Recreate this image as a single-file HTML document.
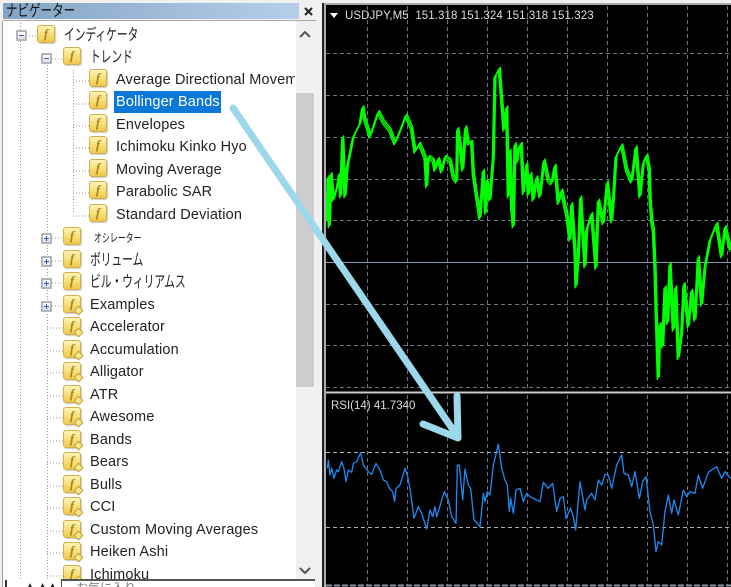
<!DOCTYPE html>
<html><head><meta charset="utf-8"><style>
html,body{margin:0;padding:0;background:#f0f0f0}
#p{position:relative;width:731px;height:587px;overflow:hidden;background:#f0f0f0;font-family:"Liberation Sans","Noto Sans CJK JP",sans-serif;filter:blur(.35px)}
.a{position:absolute}
.t{position:absolute;font-size:14.5px;line-height:18px;letter-spacing:.15px;color:#222;white-space:nowrap;margin-top:1px}
.j{font-size:16px;letter-spacing:0;transform-origin:0 50%;transform:scaleX(.67);margin-top:2px}
.ic{position:absolute;width:16px;height:16px;border:1px solid #d0b04a;border-radius:3px;background:linear-gradient(#fff3b8,#f8de74 55%,#f0c84c);box-shadow:1px 1px 1px #ccc;font:italic bold 13px/16px "Liberation Serif",serif;color:#a8862a;text-align:center}
.ic b{position:absolute;right:-2px;bottom:-2px;width:5px;height:5px;background:#fbe68a;border:1px solid #c0a038;transform:rotate(45deg)}
.bx{position:absolute;width:7px;height:7px;border:2px solid #b4b4b8;background:linear-gradient(#fff,#dde);border-radius:1px}
.bx:before{content:"";position:absolute;left:1px;top:3px;width:5px;height:1px;background:#3a5aa8}
.pl:after{content:"";position:absolute;left:3px;top:1px;width:1px;height:5px;background:#3a5aa8}
</style></head><body><div id="p">
<div class="a" style="left:3px;top:21px;width:312px;height:566px;background:#fff"></div>
<div class="a" style="left:3px;top:3px;width:296px;height:16px;background:linear-gradient(90deg,#83a3c4,#b6cfe9)"></div>
<div class="a" style="left:6px;top:3px;font-size:16px;line-height:18px;color:#111;transform-origin:0 50%;transform:scaleX(.72)">ナビゲーター</div>
<svg class="a" style="left:304px;top:7px" width="10" height="9"><path d="M1 1L8 8M8 1L1 8" stroke="#222" stroke-width="2"/></svg>
<div class="a" style="left:3px;top:20px;width:313px;height:1px;background:#aaa"></div>
<div class="a" style="left:2px;top:21px;width:1px;height:566px;background:#999"></div>
<div class="a" style="left:296px;top:21px;width:19px;height:559px;background:#f0f0f0"></div>
<div class="a" style="left:296px;top:93px;width:18px;height:294px;background:#cdcdcd"></div>
<svg class="a" style="left:299px;top:30px" width="12" height="8"><path d="M1 7L6 2L11 7" stroke="#555" stroke-width="2" fill="none"/></svg>
<svg class="a" style="left:299px;top:567px" width="12" height="8"><path d="M1 1L6 6L11 1" stroke="#555" stroke-width="2" fill="none"/></svg>

<svg class="a" style="left:0;top:0" width="296" height="587" stroke="#999" stroke-dasharray="1 2" fill="none">
<path d="M20.5 23V580M47.5 65V580M73.5 70V214"/>
<path d="M26 36H37M52 59H63M73 81H89M73 104H89M73 126H89M73 148H89M73 171H89M73 193H89M73 216H89M52 238H63M52 261H63M52 283H63M52 306H63M47 328H63M47 351H63M47 373H63M47 396H63M47 418H63M47 441H63M47 463H63M47 486H63M47 508H63M47 531H63M47 553H63M47 576H63"/>
</svg>

<div class="bx" style="left:16px;top:30px"></div><div class="ic" style="left:37px;top:25px">f</div><div class="t j" style="left:64px;top:25px">インディケータ</div>
<div class="bx" style="left:41px;top:53px"></div><div class="ic" style="left:63px;top:47px">f</div><div class="t j" style="left:90px;top:47px">トレンド</div>
<div class="ic" style="left:89px;top:69px">f</div><div class="t" style="left:116px;top:70px;width:179px;overflow:hidden">Average Directional Movement</div>
<div class="ic" style="left:89px;top:91px">f</div><div class="a" style="left:114px;top:91px;width:107px;height:22px;background:#0a78d7"></div><div class="t" style="left:116px;top:92px;color:#fff">Bollinger Bands</div>
<div class="ic" style="left:89px;top:114px">f</div><div class="t" style="left:116px;top:115px">Envelopes</div>
<div class="ic" style="left:89px;top:136px">f</div><div class="t" style="left:116px;top:137px">Ichimoku Kinko Hyo</div>
<div class="ic" style="left:89px;top:159px">f</div><div class="t" style="left:116px;top:160px">Moving Average</div>
<div class="ic" style="left:89px;top:181px">f</div><div class="t" style="left:116px;top:182px">Parabolic SAR</div>
<div class="ic" style="left:89px;top:204px">f</div><div class="t" style="left:116px;top:205px">Standard Deviation</div>
<div class="bx pl" style="left:41px;top:233px"></div><div class="ic" style="left:63px;top:227px">f</div><div class="t j" style="left:94px;top:227px;font-size:12px;transform:scaleX(.66)">オシレーター</div>
<div class="bx pl" style="left:41px;top:256px"></div><div class="ic" style="left:63px;top:250px">f</div><div class="t j" style="left:90px;top:250px">ボリューム</div>
<div class="bx pl" style="left:41px;top:278px"></div><div class="ic" style="left:63px;top:272px">f</div><div class="t j" style="left:90px;top:272px">ビル・ウィリアムス</div>
<div class="bx pl" style="left:41px;top:301px"></div><div class="ic" style="left:63px;top:295px">f<b></b></div><div class="t" style="left:90px;top:295px">Examples</div>
<div class="ic" style="left:63px;top:317px">f<b></b></div><div class="t" style="left:90px;top:317px">Accelerator</div>
<div class="ic" style="left:63px;top:340px">f<b></b></div><div class="t" style="left:90px;top:340px">Accumulation</div>
<div class="ic" style="left:63px;top:362px">f<b></b></div><div class="t" style="left:90px;top:362px">Alligator</div>
<div class="ic" style="left:63px;top:385px">f<b></b></div><div class="t" style="left:90px;top:385px">ATR</div>
<div class="ic" style="left:63px;top:407px">f<b></b></div><div class="t" style="left:90px;top:407px">Awesome</div>
<div class="ic" style="left:63px;top:430px">f<b></b></div><div class="t" style="left:90px;top:430px">Bands</div>
<div class="ic" style="left:63px;top:452px">f<b></b></div><div class="t" style="left:90px;top:452px">Bears</div>
<div class="ic" style="left:63px;top:475px">f<b></b></div><div class="t" style="left:90px;top:475px">Bulls</div>
<div class="ic" style="left:63px;top:497px">f<b></b></div><div class="t" style="left:90px;top:497px">CCI</div>
<div class="ic" style="left:63px;top:520px">f<b></b></div><div class="t" style="left:90px;top:520px">Custom Moving Averages</div>
<div class="ic" style="left:63px;top:542px">f<b></b></div><div class="t" style="left:90px;top:542px">Heiken Ashi</div>
<div class="ic" style="left:63px;top:565px">f<b></b></div><div class="t" style="left:90px;top:565px">Ichimoku</div>

<div class="a" style="left:3px;top:580px;width:312px;height:7px;background:#fff"></div>
<div class="a" style="left:61px;top:579px;width:254px;height:2px;background:#555"></div>
<div class="a" style="left:61px;top:579px;width:1px;height:8px;background:#555"></div>
<div class="a" style="left:5px;top:580px;width:2px;height:7px;background:#333"></div>
<div class="a" style="left:76px;top:581px;font-size:12px;line-height:14px;color:#777">お気に入り</div>
<div class="a" style="left:25px;top:582px;font-size:10px;line-height:10px;color:#222">▲ ▲▲</div>

<div class="a" style="left:322px;top:3px;width:409px;height:584px;background:#222"></div>
<div class="a" style="left:324px;top:3px;width:407px;height:584px;background:#aaa"></div>
<div class="a" style="left:326px;top:5px;width:405px;height:582px;background:#000"></div>
<svg class="a" style="left:0;top:0" width="731" height="587" fill="none">
<g stroke="#6a7585" stroke-width="1" stroke-dasharray="4 3">
<path d="M367.5 6V392M407.5 6V392M447.5 6V392M487.5 6V392M527.5 6V392M567.5 6V392M607.5 6V392M647.5 6V392M687.5 6V392M727.5 6V392"/>
<path d="M367.5 395V585M407.5 395V585M447.5 395V585M487.5 395V585M527.5 395V585M567.5 395V585M607.5 395V585M647.5 395V585M687.5 395V585M727.5 395V585"/>
<path d="M326 53.5H731M326 95.5H731M326 137.5H731M326 179.5H731M326 220.5H731M326 304.5H731M326 345.5H731M326 387.5H731"/>
</g>
<path d="M326 262.5H731" stroke="#8a9bb0"/>
<rect x="326" y="389" width="405" height="6" fill="#000"/>
<path d="M326 392.5H731" stroke="#ccc" stroke-width="2"/>
<path d="M326 452.5H731M326 527.5H731" stroke="#b0b0b0" stroke-dasharray="4 3"/>
<path d="M326 585.5H731" stroke="#8a97a8" stroke-width="2" stroke-dasharray="6 2"/>
<g transform="translate(320,0) scale(.33333)">
<polyline id="g1" stroke="#00ff00" stroke-width="4" stroke-linejoin="bevel" points="22,660 24,530 28,680 33,520 40,600 48,570 52,560 58,520 62,590 68,410 75,590 82,500 90,460 100,410 110,390 120,370 128,320 135,360 143,385 150,410 160,380 175,335 190,365 210,390 225,430 245,380 258,345 275,385 285,455 298,430 315,470 320,560 325,470 340,480 345,510 355,475 365,515 375,470 390,480 400,530 410,545 413,385 420,430 428,510 437,380 445,430 455,425 460,520 470,590 480,655 490,510 497,640 500,540 510,600 520,470 525,230 538,205 545,300 552,390 560,320 565,590 570,450 575,620 580,680 585,430 590,490 597,440 604,430 610,580 620,490 625,585 632,520 640,600 650,530 660,590 672,480 685,540 695,550 705,495 715,610 725,570 735,620 740,640 750,720 755,610 765,750 768,860 775,770 782,590 795,800 800,690 815,640 828,805 835,600 850,670 862,545 868,600 875,665 880,600 888,470 905,435 920,510 935,545 948,440 960,590 970,490 980,465 988,510 990,590 995,660 1000,690 1005,800 1008,920 1015,1135 1020,970 1028,1040 1035,860 1043,970 1050,790 1060,990 1067,860 1075,1075 1085,1000 1092,850 1105,980 1115,870 1125,960 1135,770 1145,915 1155,800 1170,720 1190,670 1205,770 1215,680 1232,750"/>
<use href="#g1" x="3" y="-4"/>
<use href="#g1" x="-3" y="5"/>
<g transform="translate(0,1155)">
<polyline stroke="#1e88ee" stroke-width="4" stroke-linejoin="round" points="22,250 25,225 30,270 35,250 42,280 50,255 55,260 65,230 72,250 78,290 85,255 95,262 100,235 110,230 122,203 130,240 145,260 155,268 168,235 180,255 190,285 200,290 208,310 218,320 224,350 228,310 240,300 255,250 262,270 270,310 282,400 295,365 305,385 320,432 330,375 338,395 345,365 350,395 358,370 365,345 373,320 385,345 395,395 408,415 412,240 418,240 428,345 435,252 445,300 452,310 462,405 472,415 480,425 490,325 495,350 502,320 510,330 520,240 535,178 545,250 555,285 562,300 568,380 572,340 580,385 588,315 600,310 610,350 620,325 630,335 640,340 660,350 670,292 685,310 698,295 710,380 720,340 730,335 738,400 745,385 752,370 760,395 767,435 780,290 795,375 800,345 815,325 825,345 835,285 845,300 855,268 865,270 875,310 890,240 905,210 912,265 925,270 935,305 945,260 958,340 968,290 978,275 990,380 1000,420 1008,500 1015,470 1025,480 1035,380 1045,330 1055,385 1062,345 1075,390 1090,315 1100,335 1110,320 1125,325 1135,270 1148,310 1165,262 1190,245 1205,280 1215,260 1232,280"/>
</g></g>
<path d="M233 108L458 437M457 396L458 438L423 424" stroke="#9bd8ea" stroke-width="7" stroke-linecap="round" stroke-linejoin="round"/>
<path d="M330 13H338L334 18Z" fill="#fff"/>
</svg>
<div class="a" style="left:345px;top:9px;font-size:11.5px;line-height:14px;color:#ddd;white-space:pre;letter-spacing:.08px">USDJPY,M5  151.318 151.324 151.318 151.323</div>
<div class="a" style="left:331px;top:399px;font-size:11.5px;line-height:14px;color:#ddd;white-space:pre">RSI(14) 41.7340</div>
</div></body></html>
